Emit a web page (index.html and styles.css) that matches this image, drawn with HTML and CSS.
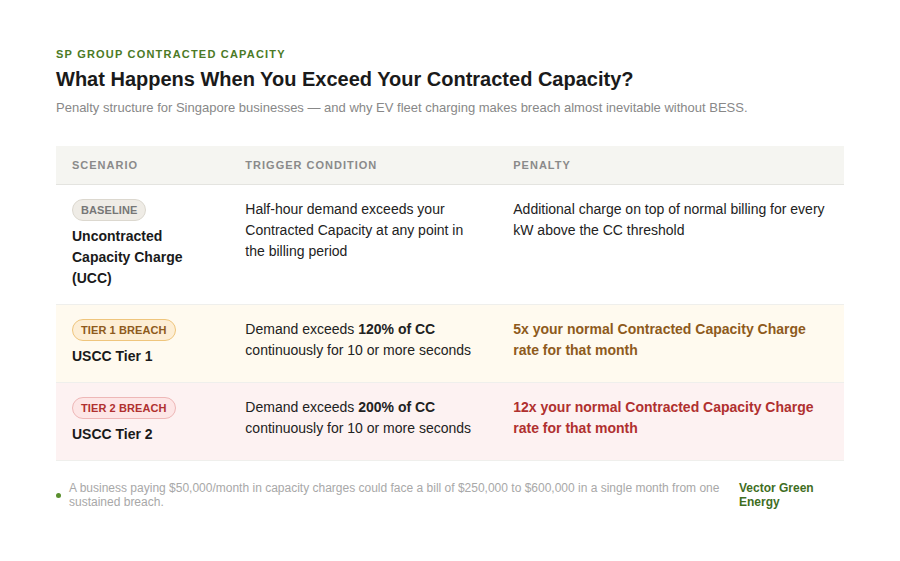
FILE: index.html
```html
<!DOCTYPE html>
<html>
<head>
<meta charset="utf-8">
<link rel="stylesheet" href="styles.css">
</head>
<body>
<div class="page">
  <div class="eyebrow">SP Group Contracted Capacity</div>
  <h1 class="title">What Happens When You Exceed Your Contracted Capacity?</h1>
  <p class="subtitle">Penalty structure for Singapore businesses — and why EV fleet charging makes breach almost inevitable without BESS.</p>

  <table class="tbl">
    <colgroup>
      <col class="c1"><col class="c2"><col class="c3">
    </colgroup>
    <thead>
      <tr><th>Scenario</th><th>Trigger Condition</th><th>Penalty</th></tr>
    </thead>
    <tbody>
      <tr class="row-base">
        <td><span class="badge badge-base">BASELINE</span><div class="name">Uncontracted Capacity Charge (UCC)</div></td>
        <td>Half-hour demand exceeds your Contracted Capacity at any point in the billing period</td>
        <td>Additional charge on top of normal billing for every kW above the CC threshold</td>
      </tr>
      <tr class="row-t1">
        <td><span class="badge badge-t1">TIER 1 BREACH</span><div class="name">USCC Tier 1</div></td>
        <td>Demand exceeds <b>120% of CC</b> continuously for 10 or more seconds</td>
        <td class="pen-t1">5x your normal Contracted Capacity Charge rate for that month</td>
      </tr>
      <tr class="row-t2">
        <td><span class="badge badge-t2">TIER 2 BREACH</span><div class="name">USCC Tier 2</div></td>
        <td>Demand exceeds <b>200% of CC</b> continuously for 10 or more seconds</td>
        <td class="pen-t2">12x your normal Contracted Capacity Charge rate for that month</td>
      </tr>
    </tbody>
  </table>

  <div class="footer">
    <span class="dot"></span>
    <p class="note">A business paying $50,000/month in capacity charges could face a bill of $250,000 to $600,000 in a single month from one sustained breach.</p>
    <div class="brand">Vector Green Energy</div>
  </div>
</div>
</body>
</html>
```

FILE: styles.css
```css
* { box-sizing: border-box; }
html, body { margin: 0; padding: 0; background: #ffffff; }
body { font-family: "Liberation Sans", Arial, sans-serif; color: #222; }
.page { padding: 47px 56px 0 56px; }
.eyebrow {
  font-size: 11px; font-weight: 700; text-transform: uppercase;
  letter-spacing: 1.2px; color: #4b7a26; line-height: 14px;
}
.title {
  margin: 5px 0 0 0; font-size: 20px; font-weight: 700; color: #1a1a1a; line-height: 26px;
}
.subtitle { margin: 8px 0 0 0; font-size: 13px; color: #888; line-height: 16px; }

.tbl { width: 100%; border-collapse: collapse; margin-top: 30px; table-layout: fixed; }
.c1 { width: 22%; } .c2 { width: 34%; } .c3 { width: 44%; }
.tbl th {
  background: #f5f5f1; text-align: left; font-size: 11px; font-weight: 700;
  text-transform: uppercase; letter-spacing: 1px; color: #8a8a8a;
  padding: 13px 16px 12px 16px; line-height: 13px; border-bottom: 1px solid #e4e4e0;
}
.tbl td {
  vertical-align: top; padding: 14px 16px 15px 16px; font-size: 14px; line-height: 21px; color: #222;
  border-bottom: 1px solid #efefec;
}
.tbl td b { font-weight: 700; color: #222; }
.row-t1 td { background: #fffaef; }
.row-t2 td { background: #fdf2f2; }
.badge {
  display: inline-block; height: 22px; line-height: 20px; padding: 0 8px; border-radius: 11px;
  font-size: 11px; font-weight: 700; letter-spacing: 0.1px; border: 1px solid;
  vertical-align: top;
}
.badge-base { background: #efece6; border-color: #dcd8cf; color: #777; }
.badge-t1 { background: #fdeed5; border-color: #efc57c; color: #8e5a1c; }
.badge-t2 { background: #fde6e6; border-color: #eeb7b7; color: #b0302f; }
.name { font-weight: 700; color: #1a1a1a; margin-top: 5px; }
.tbl td.pen-t1 { color: #8e5a1c; font-weight: 700; }
.tbl td.pen-t2 { color: #b0302f; font-weight: 700; }

.footer { display: flex; align-items: center; margin-top: 20px; }
.dot { width: 5px; height: 5px; border-radius: 50%; background: #5a8f2e; flex-shrink: 0; margin-right: 8px; }
.note { margin: 0; flex: 1; font-size: 12px; line-height: 14px; color: #a8a8a8; }
.brand { width: 105px; flex-shrink: 0; margin-left: 19px; font-size: 12px; font-weight: 700; color: #3f6e1f; line-height: 14px; align-self: flex-start; }
```
